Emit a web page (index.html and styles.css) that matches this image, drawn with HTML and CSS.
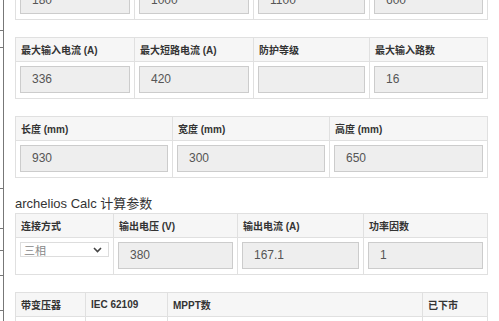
FILE: index.html
```html
<!DOCTYPE html>
<html lang="zh">
<head>
    <meta charset="UTF-8">
    <meta name="viewport" content="width=device-width, initial-scale=1.0">
    <title>逆变器参数</title>
    <link rel="stylesheet" href="styles.css">
</head>
<body>
    <div class="page">
        <div class="rail">
            <span class="tick"></span>
            <span class="tick"></span>
            <span class="tick"></span>
            <span class="tick"></span>
            <span class="tick"></span>
            <span class="tick"></span>
            <span class="tick"></span>
        </div>
        <div class="content">
            <table class="grid cut">
                <colgroup><col class="q1"><col class="q2"><col class="q3"><col class="q4"></colgroup>
                <tr><th>最大功率点电压下限 (V)</th><th>最大输入电压 (V)</th><th>启动电压 (V)</th><th>额定输入电压 (V)</th></tr>
                <tr>
                    <td><div class="field">180</div></td>
                    <td><div class="field">1000</div></td>
                    <td><div class="field">1100</div></td>
                    <td><div class="field">600</div></td>
                </tr>
            </table>

            <table class="grid">
                <colgroup><col class="q1"><col class="q2"><col class="q3"><col class="q4"></colgroup>
                <tr><th>最大输入电流 (A)</th><th>最大短路电流 (A)</th><th>防护等级</th><th>最大输入路数</th></tr>
                <tr>
                    <td><div class="field">336</div></td>
                    <td><div class="field">420</div></td>
                    <td><div class="field"></div></td>
                    <td><div class="field">16</div></td>
                </tr>
            </table>

            <table class="grid">
                <colgroup><col class="t1"><col class="t2"><col class="t3"></colgroup>
                <tr><th>长度 (mm)</th><th>宽度 (mm)</th><th>高度 (mm)</th></tr>
                <tr>
                    <td><div class="field">930</div></td>
                    <td><div class="field">300</div></td>
                    <td><div class="field">650</div></td>
                </tr>
            </table>

            <h3 class="section">archelios Calc 计算参数</h3>

            <table class="grid">
                <colgroup><col class="c1"><col class="c2"><col class="c3"><col class="c4"></colgroup>
                <tr><th>连接方式</th><th>输出电压 (V)</th><th>输出电流 (A)</th><th>功率因数</th></tr>
                <tr>
                    <td>
                        <div class="select">
                            <span>三相</span>
                            <svg width="9" height="6" viewBox="0 0 9 6"><path d="M1 1l3.5 3.5L8 1" fill="none" stroke="#444" stroke-width="1.6"/></svg>
                        </div>
                    </td>
                    <td><div class="field">380</div></td>
                    <td><div class="field">167.1</div></td>
                    <td><div class="field">1</div></td>
                </tr>
            </table>

            <table class="grid">
                <colgroup><col class="m1"><col class="m2"><col class="m3"><col class="m4"></colgroup>
                <tr><th>带变压器</th><th>IEC 62109</th><th>MPPT数</th><th>已下市</th></tr>
                <tr>
                    <td><div class="box"></div></td>
                    <td><div class="box"></div></td>
                    <td><div class="field"></div></td>
                    <td><div class="box"></div></td>
                </tr>
            </table>
        </div>
    </div>
</body>
</html>
```

FILE: styles.css
```css
*{
    box-sizing: border-box;
}
body{
    margin: 0;
    font-family: "Liberation Sans", Arial, "Noto Sans CJK SC", sans-serif;
    color: #333;
    background-color: #fff;
    overflow: hidden;
}
.page{
    display: flex;
    min-height: 321px;
}
.rail{
    position: relative;
    width: 4px;
    border-right: 1px solid #777;
}
.tick{
    position: absolute;
    left: 0;
    width: 3px;
    height: 1px;
    background-color: #777;
}
.tick:nth-child(1){ top: 30px; }
.tick:nth-child(2){ top: 47px; }
.tick:nth-child(3){ top: 188px; }
.tick:nth-child(4){ top: 228px; }
.tick:nth-child(5){ top: 250px; }
.tick:nth-child(6){ top: 275px; }
.tick:nth-child(7){ top: 310px; }
.content{
    padding-left: 11px;
    width: 483px;
}
.grid{
    width: 472px;
    border-collapse: collapse;
    table-layout: fixed;
    margin-bottom: 17px;
}
.cut{
    margin-top: -42px;
}
.q1{ width: 119px; }
.q2{ width: 119px; }
.q3{ width: 116px; }
.q4{ width: 118px; }
.t1{ width: 157px; }
.t2{ width: 157px; }
.t3{ width: 158px; }
.c1{ width: 98px; }
.c2{ width: 124px; }
.c3{ width: 126px; }
.c4{ width: 124px; }
.m1{ width: 70px; }
.m2{ width: 82px; }
.m3{ width: 255px; }
.m4{ width: 65px; }
.grid th{
    height: 24px;
    padding: 0 5px;
    background-color: #f6f6f6;
    border: 1px solid #e0e0e0;
    font-size: 10px;
    font-weight: bold;
    color: #333;
    text-align: left;
    white-space: nowrap;
    overflow: hidden;
}
.grid td{
    height: 37px;
    padding: 4px;
    border: 1px solid #e0e0e0;
    vertical-align: top;
}
.field{
    height: 27px;
    padding-left: 11px;
    background-color: #eee;
    border: 1px solid #ccc;
    font-size: 12px;
    line-height: 25px;
    color: #555;
}
.select{
    display: flex;
    justify-content: space-between;
    align-items: center;
    height: 15px;
    padding: 0 6px 0 3px;
    border: 1px solid #ddd;
    background-color: #fff;
    font-size: 11px;
    color: #888;
}
.box{
    width: 35px;
    height: 27px;
    background-color: #fff;
    border: 1px solid #ccc;
}
.section{
    margin: 0;
    height: 18px;
    font-size: 13px;
    font-weight: normal;
    line-height: 18px;
    color: #333;
}
```
